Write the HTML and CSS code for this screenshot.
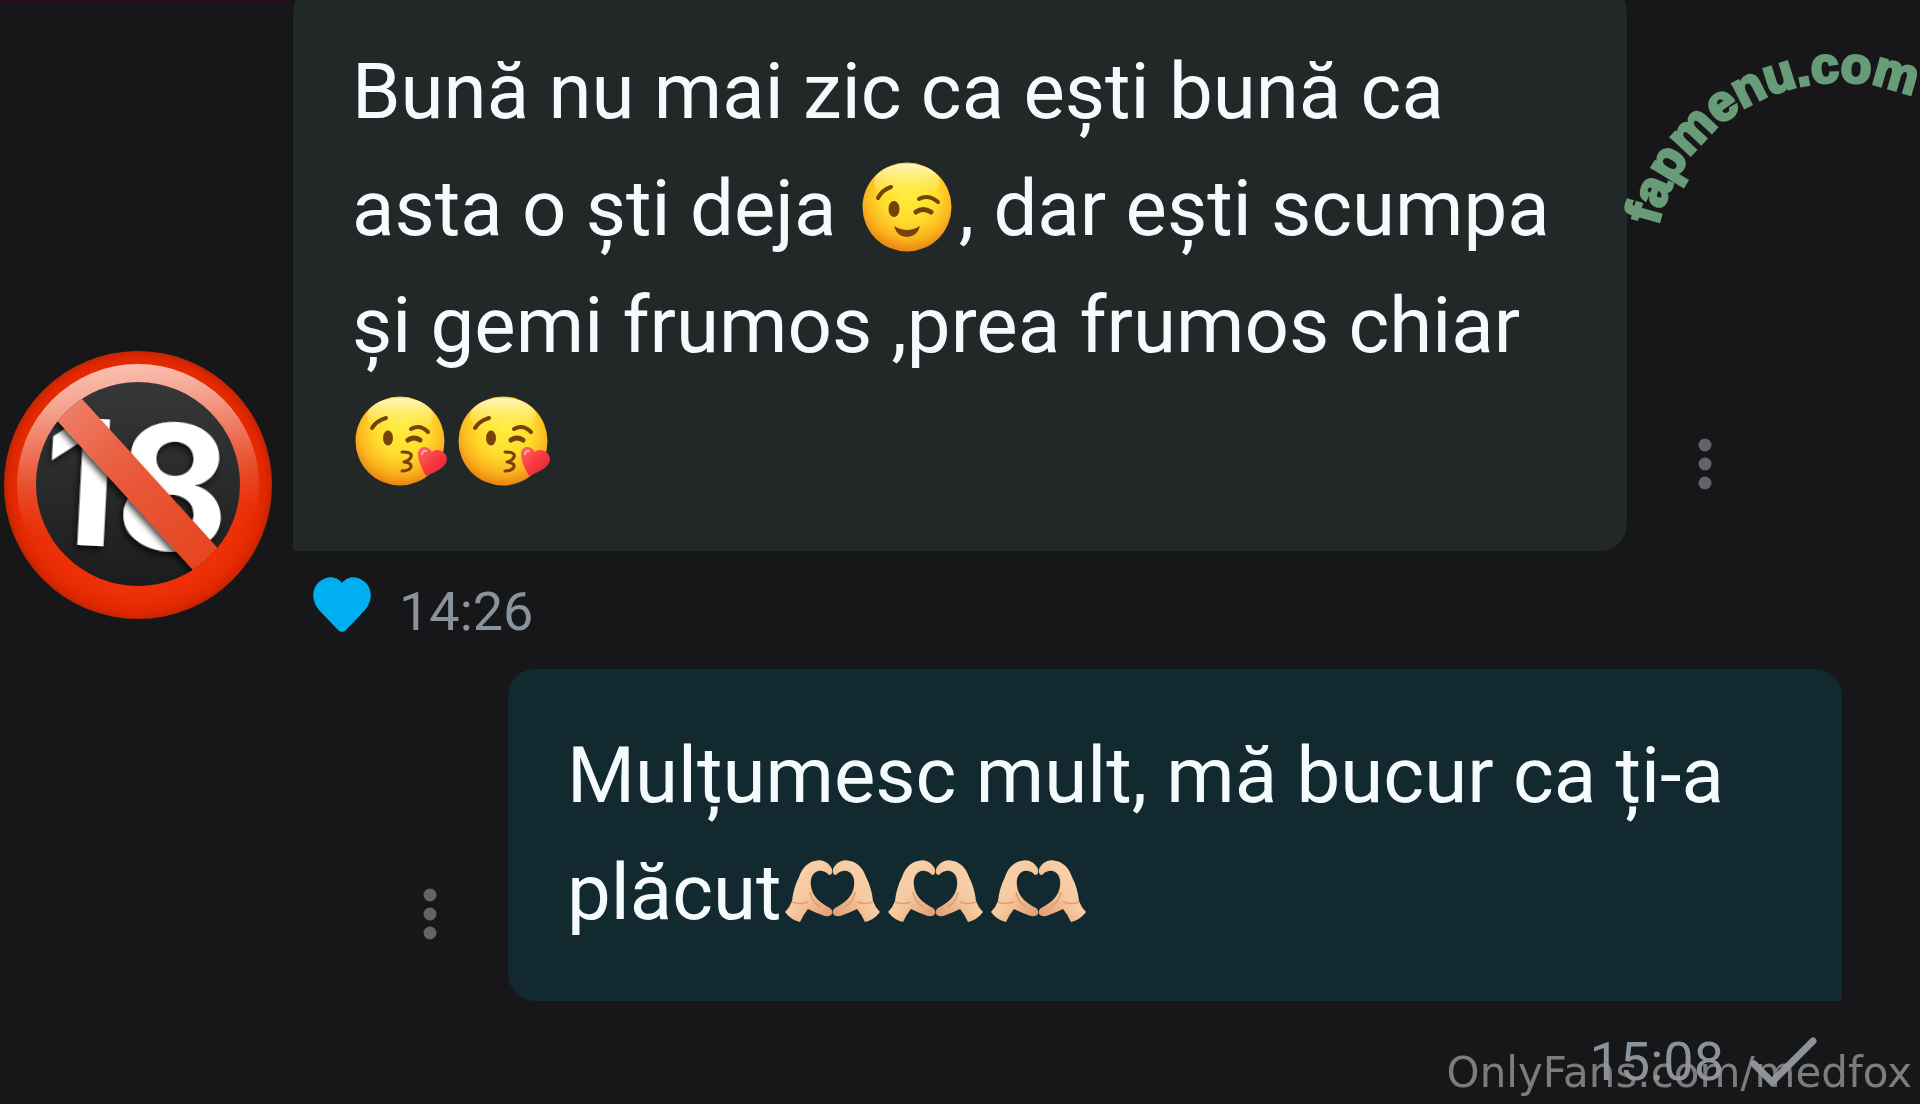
FILE: index.html
```html
<!DOCTYPE html>
<html lang="ro">
<head>
	<meta charset="UTF-8">
	<title>Chat</title>
	<link rel="stylesheet" href="styles.css">
</head>
<body>
	<!-- shared drawings -->
	<svg class="sprite" width="0" height="0" aria-hidden="true">
		<defs>
			<radialGradient id="face" cx="52%" cy="36%" r="62%">
				<stop offset="0" stop-color="#ffee3c"/>
				<stop offset=".5" stop-color="#ffdc2c"/>
				<stop offset=".8" stop-color="#fbb51e"/>
				<stop offset="1" stop-color="#ec8a12"/>
			</radialGradient>
			<linearGradient id="shine" x1="0" y1="0" x2="0" y2="1">
				<stop offset="0" stop-color="#fffbd8" stop-opacity=".9"/>
				<stop offset="1" stop-color="#fff04a" stop-opacity="0"/>
			</linearGradient>
			<linearGradient id="love" x1="0" y1="0" x2="1" y2="1">
				<stop offset="0" stop-color="#ff6b66"/>
				<stop offset=".5" stop-color="#f83a40"/>
				<stop offset="1" stop-color="#d91f35"/>
			</linearGradient>
			<linearGradient id="skin" x1="0" y1="0" x2="1" y2="1">
				<stop offset="0" stop-color="#fbd8b2"/>
				<stop offset=".5" stop-color="#f7c9a0"/>
				<stop offset="1" stop-color="#e0946a"/>
			</linearGradient>
			<symbol id="wink" viewBox="-4 1 103 96">
				<circle cx="47" cy="48" r="44.5" fill="url(#face)"/>
				<ellipse cx="47" cy="23" rx="33" ry="18" fill="url(#shine)"/>
				<ellipse cx="34" cy="50" rx="5.5" ry="8" fill="#75430a"/>
				<g fill="none" stroke="#75430a" stroke-width="4" stroke-linecap="round">
					<path d="M18 39Q22 31 31 28"/>
					<path d="M59 40Q68 35 78 43"/>
					<path d="M56 53Q63 48 71 53" stroke-width="5"/>
				</g>
				<path d="M34 67Q47 75 60 67Q57 78 47 78Q37 78 34 67Z" fill="#75430a"/>
			</symbol>
			<symbol id="kiss" viewBox="-1 1 103 96">
				<circle cx="47" cy="48" r="44.5" fill="url(#face)"/>
				<ellipse cx="47" cy="23" rx="33" ry="18" fill="url(#shine)"/>
				<ellipse cx="35" cy="45" rx="5" ry="7.5" fill="#75430a"/>
				<g fill="none" stroke="#75430a" stroke-width="4" stroke-linecap="round">
					<path d="M19 35Q23 28 33 25"/>
					<path d="M58 36Q67 31 75 39"/>
					<path d="M55 47Q61 43 67 47" stroke-width="5"/>
					<path d="M49 59Q60 59 58 64Q56 68 51 69Q59 70 58 74Q56 78 49 78" stroke-width="3" stroke-linejoin="round"/>
				</g>
				<path d="M73 83C69 76 65 68 65 61C65 53 74 51 79 59C85 54 94 59 94 67C93 75 82 79 73 83Z" fill="url(#love)"/>
				<path d="M69 61Q70 57 73 58" fill="none" stroke="#ffb0a8" stroke-width="2" stroke-linecap="round"/>
			</symbol>
			<symbol id="hands" viewBox="0 -2 103 96">
				<g id="hand">
					<path d="M3 66Q8 61 10 55C11 46 13 39 17 31C20 22 26 16 33 15C41 12 48 18 50 23Q51 29 47 29Q42 24 36 25C30 27 28 33 29 40C30 50 38 57 48 62Q51 64 50 68Q47 72 40 69Q32 66 26 63Q21 69 18 76Q9 74 3 66Z" fill="url(#skin)"/>
					<path d="M10 56Q17 59 26 56" fill="none" stroke="#e0a078" stroke-width="1.5"/>
					<path d="M28 46Q29 55 38 61" fill="none" stroke="#dd9a72" stroke-width="1.5"/>
				</g>
				<use href="#hand" transform="translate(101 0) scale(-1 1)"/>
			</symbol>
			<symbol id="dots" viewBox="0 0 16 54">
				<circle cx="8" cy="8" r="6.5"/>
				<circle cx="8" cy="27" r="6.5"/>
				<circle cx="8" cy="46" r="6.5"/>
			</symbol>
		</defs>
	</svg>

	<main class="chat">
		<article class="message received">
			<svg class="avatar" viewBox="0 0 268 268" role="img" aria-label="18">
				<defs>
					<radialGradient id="ring" cx="50%" cy="50%" r="50%">
						<stop offset=".8" stop-color="#ee3008"/>
						<stop offset=".94" stop-color="#e32800"/>
						<stop offset="1" stop-color="#c62400"/>
					</radialGradient>
					<linearGradient id="gloss" x1=".45" y1="0" x2=".55" y2="1">
						<stop offset="0" stop-color="#fbc0b0"/>
						<stop offset=".15" stop-color="#f5a390"/>
						<stop offset=".35" stop-color="#ec6c50"/>
						<stop offset=".55" stop-color="#e64a27" stop-opacity=".6"/>
						<stop offset=".75" stop-color="#e32800" stop-opacity="0"/>
					</linearGradient>
					<linearGradient id="slash" gradientUnits="userSpaceOnUse" x1="60" y1="50" x2="205" y2="212">
						<stop offset="0" stop-color="#ee8069"/>
						<stop offset=".4" stop-color="#e95c3d"/>
						<stop offset="1" stop-color="#e64420"/>
					</linearGradient>
					<linearGradient id="plate" x1="0" y1="0" x2="0" y2="1">
						<stop offset="0" stop-color="#363838"/>
						<stop offset="1" stop-color="#1c1c1d"/>
					</linearGradient>
					<filter id="shade" x="-20%" y="-20%" width="140%" height="140%">
						<feDropShadow dx="-2" dy="4" stdDeviation="3" flood-color="#000" flood-opacity=".7"/>
					</filter>
					<clipPath id="hole">
						<circle cx="134" cy="133" r="102"/>
					</clipPath>
				</defs>
				<circle cx="134" cy="134" r="134" fill="url(#ring)"/>
				<circle cx="134" cy="134" r="121" fill="url(#gloss)"/>
				<circle cx="134" cy="133" r="102" fill="url(#plate)"/>
				<text class="avatar-text" x="39 113" y="197" transform="rotate(3 134 134)" filter="url(#shade)">18</text>
				<g clip-path="url(#hole)">
					<path d="M44 35L225 234" stroke="url(#slash)" stroke-width="33" filter="url(#shade)"/>
				</g>
			</svg>
			<p class="bubble">Bună nu mai zic ca ești bună ca asta o ști deja <svg class="emoji" role="img" aria-label="wink"><use href="#wink"/></svg>, dar ești scumpa și gemi frumos ,prea frumos chiar <svg class="emoji" role="img" aria-label="kiss"><use href="#kiss"/></svg><svg class="emoji" role="img" aria-label="kiss"><use href="#kiss"/></svg></p>
			<button class="menu" type="button" aria-label="Menu"><svg><use href="#dots"/></svg></button>
			<footer class="meta">
				<svg class="heart" viewBox="0 0 58 70" aria-hidden="true"><path d="M29 55Q27 55 25 53L6 33C-3 23-1 8 9 3C16-2 25 0 29 6C33 0 42-2 49 3C59 8 61 23 52 33L33 53Q31 55 29 55Z"/></svg>
				<time>14:26</time>
			</footer>
		</article>

		<article class="message sent">
			<button class="menu" type="button" aria-label="Menu"><svg><use href="#dots"/></svg></button>
			<p class="bubble">Mulțumesc mult, mă bucur ca ți-a plăcut<svg class="emoji" role="img" aria-label="heart hands"><use href="#hands"/></svg><svg class="emoji" role="img" aria-label="heart hands"><use href="#hands"/></svg><svg class="emoji" role="img" aria-label="heart hands"><use href="#hands"/></svg></p>
			<footer class="meta">
				<time>15:08</time>
				<svg class="check" viewBox="0 0 68 50" aria-hidden="true"><path d="M4 27L22 45L63 4"/></svg>
			</footer>
		</article>
	</main>

	<svg class="stamp" viewBox="0 0 320 250" aria-hidden="true">
		<path id="arc" d="M58 226A187 187 0 0 1 427 266" fill="none" stroke="none"/>
		<text><textPath href="#arc">fapmenu.com</textPath></text>
	</svg>
	<div class="credit">OnlyFans.com/medfox</div>
</body>
</html>
```
FILE: styles.css
```css
*{
	margin: 0;
	padding: 0;
	box-sizing: border-box;
}
body{
	background: #171719;
	color: #f5fafc;
	font-family: Roboto, "Liberation Sans", sans-serif;
	overflow: hidden;
}
.sprite{
	position: absolute;
}
.chat{
	min-height: 100vh;
	overflow: hidden;
	background: linear-gradient(#330828, #330828) no-repeat 0 0 / 290px 2px;
}
.message{
	display: grid;
}
.received{
	grid-template-columns: 293px 1fr 293px;
	margin-top: -15px;
}
.sent{
	grid-template-columns: 508px 1fr 78px;
}
.bubble{
	grid-column: 2;
	grid-row: 1;
	padding: 48px 59px 50px;
	border-radius: 27px;
	font-size: 78px;
	line-height: 117px;
}
.received .bubble{
	background: #222728;
	border-bottom-left-radius: 0;
}
.sent .bubble{
	background: #12292f;
	border-bottom-right-radius: 0;
}
.emoji{
	width: 103px;
	height: 96px;
	vertical-align: -21px;
}
.avatar{
	grid-column: 1;
	grid-row: 1 / 3;
	align-self: end;
	width: 268px;
	height: 268px;
	margin: 0 0 50px 4px;
}
.avatar-text{
	fill: #fff;
	font: 700 174px Inter, sans-serif;
}
.menu{
	grid-row: 1;
	align-self: end;
	margin: 0 70px 60px;
	width: 16px;
	height: 54px;
	border: 0;
	background: none;
	cursor: pointer;
}
.menu svg{
	display: block;
	width: 16px;
	height: 54px;
	fill: #636467;
}
.received .menu{
	grid-column: 3;
}
.sent .menu{
	grid-column: 1;
	justify-self: end;
}
.meta{
	grid-column: 2;
	grid-row: 2;
	display: flex;
	align-items: center;
	gap: 28px;
	height: 118px;
	padding: 3px 20px 0;
	color: #8a929c;
	font-size: 54px;
	line-height: 60px;
}
.sent .meta{
	justify-content: flex-end;
	gap: 26px;
	padding-right: 24px;
}
.heart{
	width: 58px;
	height: 70px;
	fill: #00aff0;
}
.check{
	width: 68px;
	height: 50px;
	fill: none;
	stroke: #8a929c;
	stroke-width: 7;
	stroke-linecap: round;
}
/* overlays */
.stamp{
	position: fixed;
	top: 0;
	right: 0;
	width: 320px;
	height: 250px;
	fill: #689c78;
	stroke: #689c78;
	stroke-width: 3;
	font: 700 50px "Liberation Sans", sans-serif;
}
.credit{
	position: fixed;
	right: 8px;
	bottom: 7px;
	color: rgba(150,150,150,.8);
	font: 42px/48px "DejaVu Sans", sans-serif;
}
```
